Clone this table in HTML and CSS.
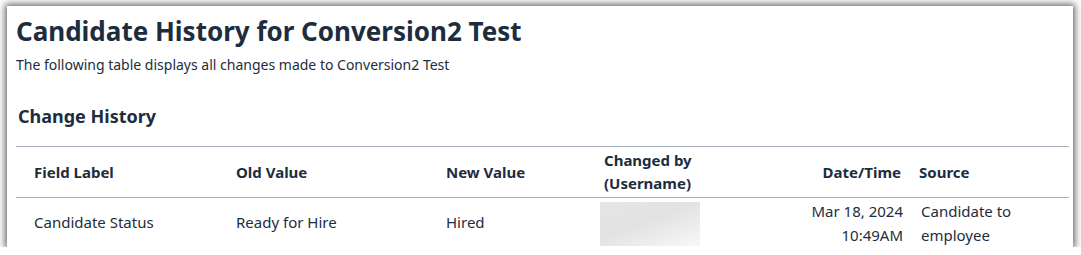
FILE: index.html
```html
<!DOCTYPE html>
<html>
<head>
<meta charset="utf-8">
<link rel="stylesheet" href="styles.css">
</head>
<body>
<div class="panel">
  <h1 class="title">Candidate History for Conversion2 Test</h1>
  <p class="subtitle">The following table displays all changes made to Conversion2 Test</p>
  <h2 class="section">Change History</h2>
  <div class="table">
    <div class="row head">
      <div class="cell">Field Label</div>
      <div class="cell">Old Value</div>
      <div class="cell">New Value</div>
      <div class="cell">Changed by<br>(Username)</div>
      <div class="cell right">Date/Time</div>
      <div class="cell src">Source</div>
    </div>
    <div class="row data">
      <div class="cell">Candidate Status</div>
      <div class="cell">Ready for Hire</div>
      <div class="cell">Hired</div>
      <div class="cell user"><div class="blur"></div></div>
      <div class="cell right top">Mar 18, 2024<br>10:49AM</div>
      <div class="cell src top">Candidate to<br>employee</div>
    </div>
  </div>
</div>
</body>
</html>
```
FILE: styles.css
```css
html, body {
  margin: 0;
  padding: 0;
  background: #ffffff;
}
body {
  font-family: "Noto Sans", "Open Sans", sans-serif;
  color: #1d2d3e;
  overflow: hidden;
}
.panel {
  margin: 6px 0 0 7px;
  width: 1066px;
  height: 241px;
  background: #fff;
  box-shadow: 0 0 7px 2px rgba(0, 0, 0, 0.6);
  overflow: hidden;
  box-sizing: border-box;
  padding: 0 4px 0 9px;
}
.title {
  margin: 0;
  padding-top: 8px;
  font-size: 26px;
  line-height: 34px;
  font-weight: 700;
  letter-spacing: 0;
}
.subtitle {
  margin: 7px 0 0;
  font-size: 14px;
  line-height: 20px;
}
.section {
  margin: 29px 0 0 2px;
  font-size: 18px;
  line-height: 24px;
  font-weight: 700;
}
.table {
  margin-top: 18px;
}
.row {
  display: grid;
  grid-template-columns: 202px 210px 158px 134px 190px 159px;
}
.row.head {
  border-top: 1px solid #a9b4be;
  border-bottom: 1px solid #a9b4be;
  height: 50px;
  font-weight: 700;
  font-size: 15px;
  line-height: 23px;
}
.row.data {
  font-size: 15px;
  line-height: 24px;
  height: 60px;
}
.cell {
  padding-left: 18px;
  display: flex;
  flex-direction: column;
  justify-content: center;
}
.head .cell {
  display: block;
  align-self: center;
}
.cell.right {
  padding-left: 0;
  padding-right: 9px;
  text-align: right;
}
.cell.src {
  padding-left: 9px;
}
.data .cell {
  height: 48px;
}
.data .cell.top {
  display: block;
  padding-top: 1px;
}
.data .cell.src {
  padding-left: 11px;
}
.data .cell.right {
  padding-right: 7px;
}
.cell.user {
  padding-left: 14px;
  justify-content: flex-start;
}
.blur {
  margin-top: 4px;
  width: 100px;
  height: 50px;
  background: linear-gradient(160deg, #e6e6e7 0%, #e2e2e3 45%, #f8f8f8 100%);
}
```
